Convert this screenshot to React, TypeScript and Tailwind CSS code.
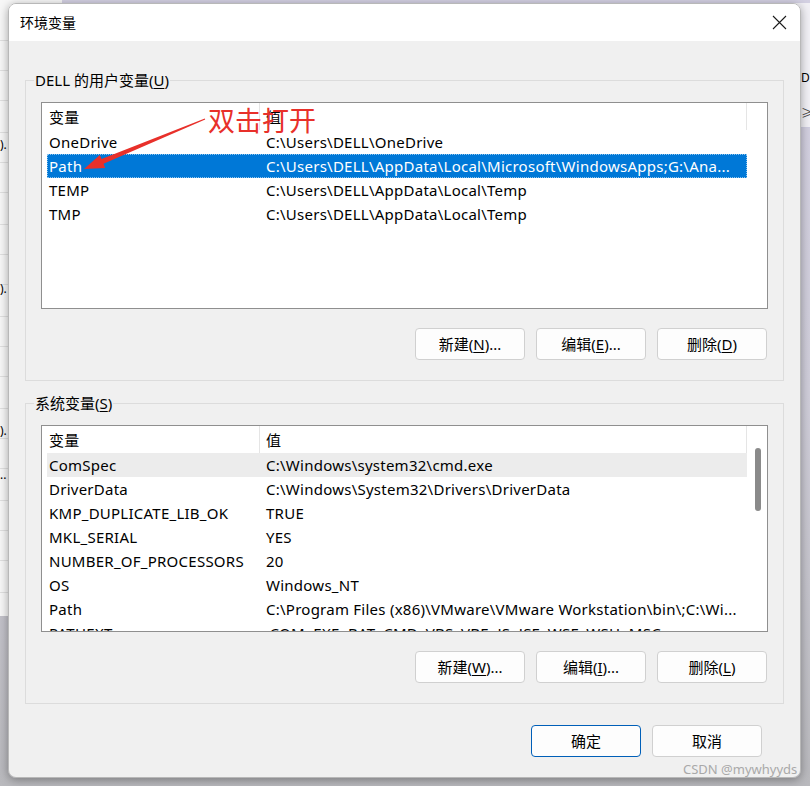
import React from 'react'

const userVars = [
    ['OneDrive', 'C:\\Users\\DELL\\OneDrive'],
    ['Path', 'C:\\Users\\DELL\\AppData\\Local\\Microsoft\\WindowsApps;G:\\Ana...'],
    ['TEMP', 'C:\\Users\\DELL\\AppData\\Local\\Temp'],
    ['TMP', 'C:\\Users\\DELL\\AppData\\Local\\Temp'],
]

const sysVars = [
    ['ComSpec', 'C:\\Windows\\system32\\cmd.exe'],
    ['DriverData', 'C:\\Windows\\System32\\Drivers\\DriverData'],
    ['KMP_DUPLICATE_LIB_OK', 'TRUE'],
    ['MKL_SERIAL', 'YES'],
    ['NUMBER_OF_PROCESSORS', '20'],
    ['OS', 'Windows_NT'],
    ['Path', 'C:\\Program Files (x86)\\VMware\\VMware Workstation\\bin\\;C:\\Wi...'],
    ['PATHEXT', '.COM;.EXE;.BAT;.CMD;.VBS;.VBE;.JS;.JSE;.WSF;.WSH;.MSC'],
]

// left edge of the window behind the dialog
const bgLines = [40, 70, 100, 132, 162, 192, 224, 254, 284, 316, 346, 376, 408, 438, 468, 500, 530, 560, 592]

function VarList({ rows, selected, hover, scroll }: { rows: string[][], selected?: number, hover?: number, scroll?: boolean }) {
    return (
        <div className='h-[207px] bg-white border border-[#8f8f8f] flex pl-[5px] overflow-hidden tracking-[0.25px]'>
            <div className='w-[700px] flex flex-col'>
                <div className='h-[27px] flex shrink-0'>
                    <div className='w-[213px] pl-[2px] pt-[2px] flex items-center border-r border-[#e5e5e5]'>变量</div>
                    <div className='w-[487px] pl-[6px] pt-[2px] flex items-center border-r border-[#e5e5e5]'>值</div>
                </div>
                {rows.map((r, i) => (
                    <div
                        key={r[0]}
                        className={
                            i === selected
                                ? 'h-[24px] flex shrink-0 items-center bg-[#0078d7] text-white outline-1 outline-dotted outline-[#8cc4ee] -outline-offset-1'
                                : i === hover
                                    ? 'h-[24px] flex shrink-0 items-center bg-[#ececec]'
                                    : 'h-[24px] flex shrink-0 items-center'
                        }
                    >
                        <div className='w-[213px] pl-[2px] whitespace-nowrap overflow-hidden'>{r[0]}</div>
                        <div className='w-[487px] pl-[6px] whitespace-nowrap overflow-hidden'>{r[1]}</div>
                    </div>
                ))}
            </div>
            {scroll && (
                <div className='flex-1 pt-[22px] pl-[8px]'>
                    <div className='w-[6px] h-[63px] rounded-full bg-[#8a8a8a]' />
                </div>
            )}
        </div>
    )
}

function Btn({ label, keyChar, tail, focused }: { label: string, keyChar?: string, tail?: string, focused?: boolean }) {
    return (
        <button
            className={
                focused
                    ? 'w-[110px] h-[32px] rounded-[4px] bg-[#fdfdfd] border border-[#005fb8] flex items-center justify-center'
                    : 'w-[110px] h-[32px] rounded-[4px] bg-[#fdfdfd] border border-[#d0d0d0] flex items-center justify-center'
            }
        >
            {label}
            {keyChar && (
                <>
                    (<span className='underline underline-offset-2'>{keyChar}</span>){tail}
                </>
            )}
        </button>
    )
}

function Group({ title, keyChar, rows, selected, hover, scroll, keys }: any) {
    return (
        <div className='relative h-[301px] border border-[#dcdcdc] px-[15px] pt-[21px]'>
            <div className='absolute -top-[12px] left-[8px] px-[1px] bg-[#f0f0f0]'>
                {title}(<span className='underline underline-offset-2'>{keyChar}</span>)
            </div>
            <VarList rows={rows} selected={selected} hover={hover} scroll={scroll} />
            <div className='mt-[19px] flex justify-end gap-[11px] pr-[1px]'>
                <Btn label='新建' keyChar={keys[0]} tail='...' />
                <Btn label='编辑' keyChar={keys[1]} tail='...' />
                <Btn label='删除' keyChar={keys[2]} />
            </div>
        </div>
    )
}

export default function App() {
    return (
        <div
            className='relative w-[810px] h-[786px] overflow-hidden bg-gradient-to-b from-[#d3d0e2] via-[#cfcdd9] to-[#b9b9bd] text-[15px] text-black'
            style={{ fontFamily: '"Noto Sans", "Noto Sans CJK SC", sans-serif' }}
        >
            {/* windows behind the dialog */}
            <div className='absolute left-0 top-0 w-[62px] h-[616px] bg-[#f7f7f7]'>
                {bgLines.map((y) => (
                    <div key={y} className='absolute left-0 w-[62px] h-px bg-[#e0e0e0]' style={{ top: y }} />
                ))}
                <div className='absolute left-0 top-[136px] text-[12px]'>).</div>
                <div className='absolute left-0 top-[280px] text-[12px]'>).</div>
                <div className='absolute left-0 top-[422px] text-[12px]'>).</div>
                <div className='absolute left-0 top-[466px] text-[12px]'>..</div>
            </div>
            <div className='absolute right-0 top-[3px] w-[40px] h-[125px] bg-[#f1f0f5] border-b border-[#cfcde0]'>
                <div className='absolute left-[31px] top-[66px] text-[12px]'>DI</div>
                <div className='absolute left-[31px] top-[102px] text-[12px] text-[#444]'>≥</div>
            </div>

            {/* dialog */}
            <div className='relative ml-[8px] mt-[3px] w-[793px] h-[775px] rounded-[8px] overflow-hidden flex flex-col shadow-[0_2px_10px_rgba(0,0,0,0.35)] border border-[#b8b8b8]'>
                <div className='h-[37px] bg-white flex items-center justify-between pl-[11px] pr-[13px] shrink-0'>
                    <span className='text-[14px]'>环境变量</span>
                    <svg width='15' height='15' viewBox='0 0 15 15'>
                        <path d='M1 1 L14 14 M14 1 L1 14' stroke='#1c1c1c' strokeWidth='1.1' />
                    </svg>
                </div>
                <div className='flex-1 bg-[#f0f0f0] px-[16px] pt-[39px]'>
                    <Group title='DELL 的用户变量' keyChar='U' rows={userVars} selected={1} keys={['N', 'E', 'D']} />
                    <div className='mt-[22px]'>
                        <Group title='系统变量' keyChar='S' rows={sysVars} hover={0} scroll keys={['W', 'I', 'L']} />
                    </div>
                    <div className='mt-[21px] flex justify-end gap-[11px] pr-[22px]'>
                        <Btn label='确定' focused />
                        <Btn label='取消' />
                    </div>
                </div>
            </div>

            {/* annotation */}
            <svg className='absolute left-0 top-0' width='810' height='786'>
                <polygon
                    points='84,169 105.2,167.9 103.5,163.7 205.2,119.5 204.8,118.5 101.5,159.1 99.8,154.9'
                    fill='#e8302a'
                />
            </svg>
            <div className='absolute left-[208px] top-[103px] text-[27px] leading-[36px] text-[#e8302a]'>双击打开</div>

            <div className='absolute left-[683px] top-[760px] text-[13px] text-[#a9a9a9]'>CSDN @mywhyyds</div>
        </div>
    )
}
